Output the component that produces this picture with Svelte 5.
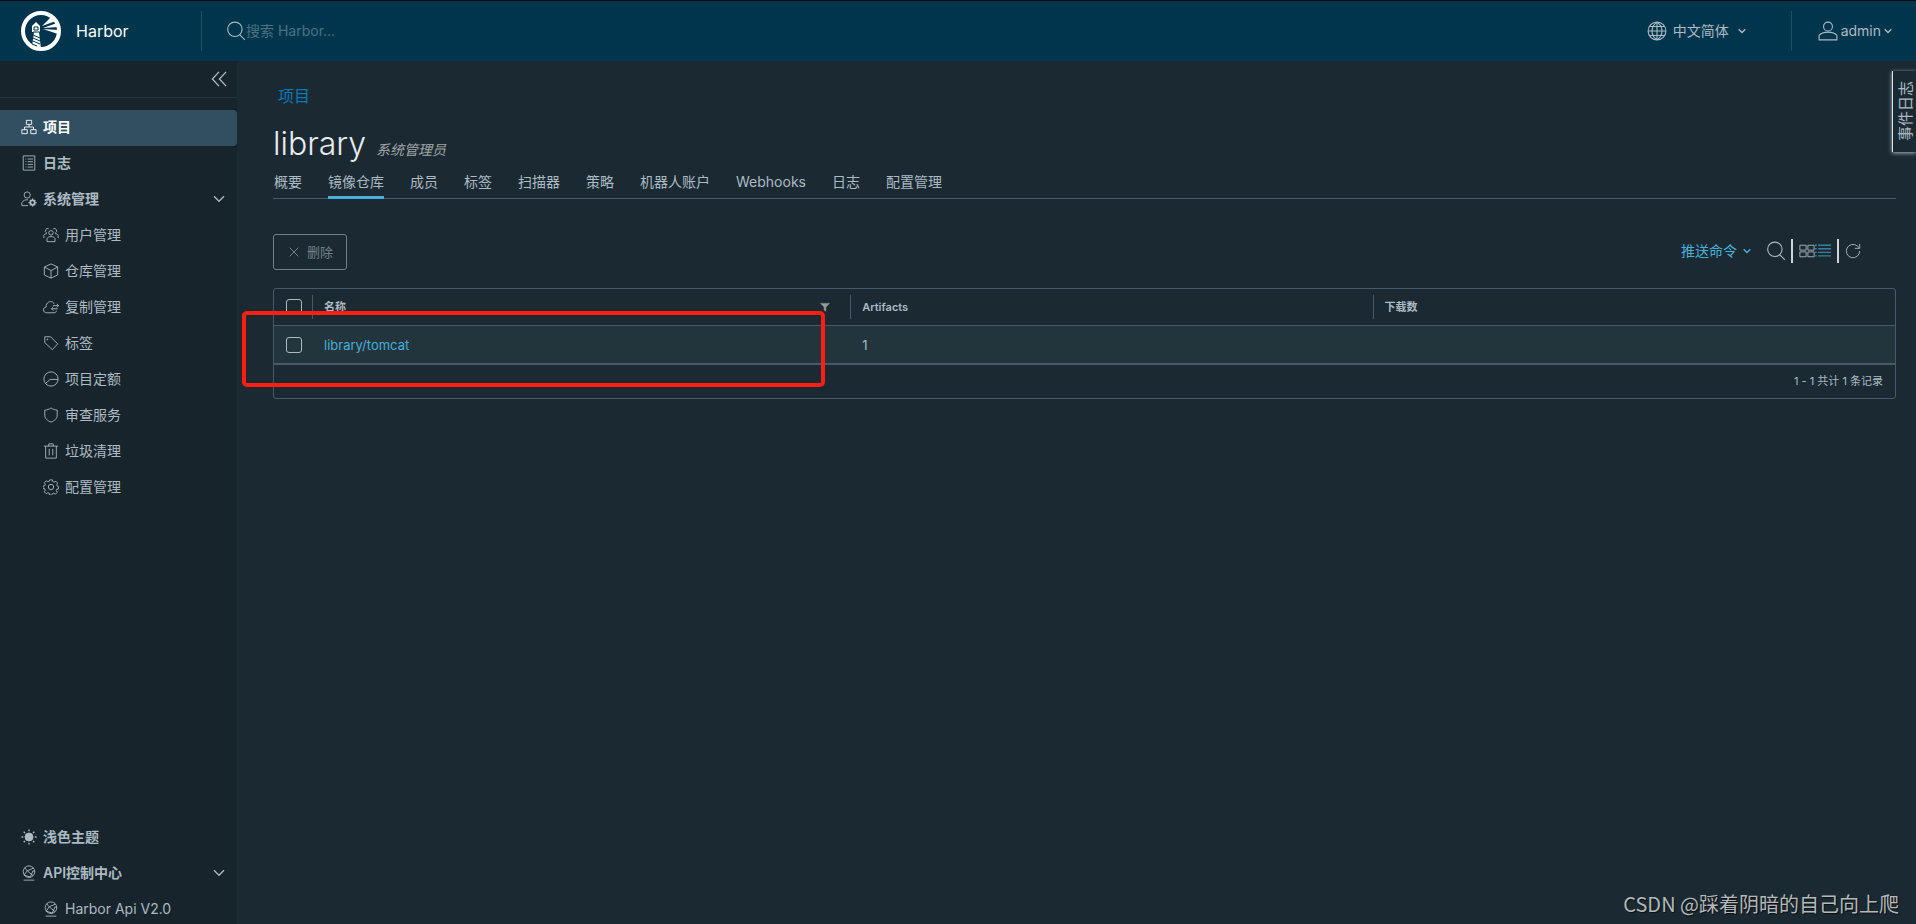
<script lang="ts">
    type NavItem = { icon: string; label: string; active?: boolean; expandable?: boolean; child?: boolean };

    const mainNav: NavItem[] = [
        { icon: 'tree', label: '项目', active: true },
        { icon: 'log', label: '日志' },
        { icon: 'admin', label: '系统管理', expandable: true },
        { icon: 'users', label: '用户管理', child: true },
        { icon: 'cube', label: '仓库管理', child: true },
        { icon: 'cloud', label: '复制管理', child: true },
        { icon: 'tag', label: '标签', child: true },
        { icon: 'quota', label: '项目定额', child: true },
        { icon: 'shield', label: '审查服务', child: true },
        { icon: 'trash', label: '垃圾清理', child: true },
        { icon: 'cog', label: '配置管理', child: true }
    ];

    const bottomNav: NavItem[] = [
        { icon: 'sun', label: '浅色主题' },
        { icon: 'api', label: 'API控制中心', expandable: true },
        { icon: 'api', label: 'Harbor Api V2.0', child: true }
    ];

    const tabs = ['概要', '镜像仓库', '成员', '标签', '扫描器', '策略', '机器人账户', 'Webhooks', '日志', '配置管理'];
    let activeTab = $state('镜像仓库');

    let repos = $state([{ name: 'library/tomcat', artifacts: 1, pulls: '', selected: false }]);
    let selectedCount = $derived(repos.filter((r) => r.selected).length);
    let keyword = $state('');

    function toggleAll(e: Event) {
        const checked = (e.target as HTMLInputElement).checked;
        repos.forEach((r) => (r.selected = checked));
    }
</script>

{#snippet icon(name: string)}
    <svg class="icon" viewBox="0 0 36 36" aria-hidden="true">
        {#if name === 'tree'}
            <path d="M12 3h12v9H12zM2 24h12v9H2zM22 24h12v9H22zM18 12v6M8 24v-6h20v6" />
        {:else if name === 'log'}
            <path d="M5 2h26v32H5zM10 9h2M15 9h12M10 15h2M15 15h12M10 21h2M15 21h12M10 27h2M15 27h12" />
        {:else if name === 'admin'}
            <circle cx="14" cy="9" r="7" />
            <path d="M16 33H2v-7c3-5 8-7 14-6" />
            <circle cx="26" cy="26" r="5" stroke-width="4" />
            <path d="M26 17v3M26 32v3M17 26h3M32 26h3M20 20l2 2M30 30l2 2M32 20l-2 2M22 30l-2 2" stroke-width="3" />
        {:else if name === 'users'}
            <circle cx="18" cy="13" r="5" />
            <path d="M9 33v-7c2-6 16-6 18 0v7zM13 4a5 5 0 1 0-5 9M2 25v-6c1-3 3-4 7-4M23 4a5 5 0 1 1 5 9M34 25v-6c-1-3-3-4-7-4" />
        {:else if name === 'cube'}
            <path d="M18 2l15 7v18l-15 7-15-7V9zM3 9l15 8 15-8M18 17v17" />
        {:else if name === 'cloud'}
            <path d="M30 26c0 3-2 5-5 5H8c-9 0-9-12-1-13C6 5 22 2 25 11M22 15h13M31 11l4 4-4 4M33 22H19M23 18l-4 4 4 4" />
        {:else if name === 'tag'}
            <path d="M4 4h13l16 16-12 13L4 17z" />
            <circle cx="10" cy="10" r="1" />
        {:else if name === 'quota'}
            <circle cx="18" cy="18" r="16" />
            <path d="M6 28l10-9h18" />
        {:else if name === 'shield'}
            <path d="M18 2c4 3 9 5 14 5v11c0 8-6 13-14 16C10 31 4 26 4 18V7c5 0 10-2 14-5z" />
        {:else if name === 'trash'}
            <path d="M2 7h32M6 7v27h24V7M13 7V2h10v5M14 13v15M22 13v15" />
        {:else if name === 'cog'}
            <path d="M15 2h6l1 4 3 1 4-2 4 4-2 4 1 3 3 1v5l-4 1-1 3 2 4-4 4-4-2-3 1-1 3h-5l-1-4-3-1-4 2-4-4 2-4-1-3-4-1v-5l4-1 1-3-2-4 4-4 4 2 3-1z" />
            <circle cx="18" cy="18" r="6" />
        {:else if name === 'sun'}
            <circle cx="18" cy="18" r="9" fill="currentColor" />
            <path d="M18 1v4M18 31v4M1 18h4M31 18h4M6 6l3 3M27 27l3 3M30 6l-3 3M9 27l-3 3" stroke-width="3" />
        {:else if name === 'api'}
            <circle cx="18" cy="15" r="13" />
            <path d="M8 6l6 7 14-6M14 13l13 11M14 13L7 23l14 4 6-14 4 2M6 34h24" />
        {:else if name === 'search'}
            <circle cx="16" cy="15" r="13" />
            <path d="M25 25l9 9" />
        {:else if name === 'globe'}
            <circle cx="18" cy="18" r="16" />
            <path d="M18 2v32M2 18h32M5 10h26M5 26h26M18 2C6 10 6 26 18 34M18 2c12 8 12 24 0 32" />
        {:else if name === 'user'}
            <circle cx="18" cy="10" r="8" />
            <path d="M2 34v-8c3-4 9-6 16-6s13 2 16 6v8z" />
        {:else if name === 'close'}
            <path d="M5 5l26 26M31 5L5 31" />
        {:else if name === 'collapse'}
            <path d="M18 2L3 18l15 16M34 2L19 18l15 16" />
        {:else if name === 'caret'}
            <path d="M3 10l15 15 15-15" />
        {:else if name === 'grid'}
            <path d="M2 5h14v11H2zM20 5h14v11H20zM2 20h14v11H2zM20 20h14v11H20z" />
        {:else if name === 'list'}
            <path d="M0 5h4M7 5h29M0 13h4M7 13h29M0 21h4M7 21h29M0 29h4M7 29h29" />
        {:else if name === 'refresh'}
            <path d="M33 18a15 15 0 1 1-5-11l4 4M33 2v10H22" />
        {:else if name === 'filter'}
            <path d="M2 5h32L21 18v15l-6-4V18z" fill="currentColor" />
        {/if}
    </svg>
{/snippet}

{#snippet navLink(item: NavItem)}
    <a href="#{item.icon}" class="nav-link" class:active={item.active} class:child={item.child}>
        {@render icon(item.icon)}
        <span>{item.label}</span>
        {#if item.expandable}
            <i class="expand">{@render icon('caret')}</i>
        {/if}
    </a>
{/snippet}

<div class="main-container">
    <header>
        <a href="#home" class="brand">
            <svg class="logo" viewBox="0 0 40 40" aria-hidden="true">
                <circle cx="20" cy="20" r="18" fill="none" stroke="#fff" stroke-width="4" />
                <path fill="#fff" d="M11 15l4-4 4 4v6h-1l2 17-9-2 2-15h-2zM21 15l10-10 4 5zM22 17l14-5 1 4zM22 18l15 1v4z" />
                <path fill="none" stroke="#00364d" d="M13 19v-3h4v3zM12 21h7M12 24l7 3M12 27l7 3M12 30l7 3M11 33l5 2" />
            </svg>
            <span>Harbor</span>
        </a>
        <label class="search">
            {@render icon('search')}
            <input type="text" aria-label="搜索" placeholder="搜索 Harbor..." bind:value={keyword} />
        </label>
        <button class="header-btn language">
            {@render icon('globe')}
            <span>中文简体</span>
            <i class="caret">{@render icon('caret')}</i>
        </button>
        <button class="header-btn account">
            {@render icon('user')}
            <span>admin</span>
            <i class="caret">{@render icon('caret')}</i>
        </button>
    </header>

    <div class="content-container">
        <nav class="sidenav">
            <div class="collapse-row">
                <button aria-label="collapse">{@render icon('collapse')}</button>
            </div>
            <div class="nav-group">
                {#each mainNav as item}
                    {@render navLink(item)}
                {/each}
            </div>
            <div class="nav-group bottom">
                {#each bottomNav as item}
                    {@render navLink(item)}
                {/each}
            </div>
        </nav>

        <main>
            <a href="#projects" class="breadcrumb">项目</a>
            <div class="title">
                <h1>library</h1>
                <em>系统管理员</em>
            </div>

            <div class="tabs" role="tablist">
                {#each tabs as tab}
                    <button role="tab" aria-selected={tab === activeTab} class:active={tab === activeTab} onclick={() => (activeTab = tab)}>{tab}</button>
                {/each}
            </div>

            <div class="toolbar">
                <button class="delete" disabled={selectedCount === 0}>
                    {@render icon('close')}
                    <span>删除</span>
                </button>
                <div class="tools">
                    <button class="push">
                        <span>推送命令</span>
                        <i class="caret">{@render icon('caret')}</i>
                    </button>
                    <button class="tool big" aria-label="search">{@render icon('search')}</button>
                    <div class="view-switch">
                        <button class="tool" aria-label="card view">{@render icon('grid')}</button>
                        <button class="tool current" aria-label="list view">{@render icon('list')}</button>
                    </div>
                    <button class="tool" aria-label="refresh">{@render icon('refresh')}</button>
                </div>
            </div>

            <div class="datagrid">
                <table>
                    <thead>
                        <tr>
                            <th class="select"><input type="checkbox" aria-label="select all" onchange={toggleAll} /></th>
                            <th class="name">
                                <div class="cell">
                                    <span>名称</span>
                                    <button aria-label="filter">{@render icon('filter')}</button>
                                </div>
                            </th>
                            <th><div class="cell">Artifacts</div></th>
                            <th><div class="cell">下载数</div></th>
                        </tr>
                    </thead>
                    <tbody>
                        {#each repos as repo}
                            <tr>
                                <td class="select"><input type="checkbox" aria-label={repo.name} bind:checked={repo.selected} /></td>
                                <td><a href="#repo">{repo.name}</a></td>
                                <td>{repo.artifacts}</td>
                                <td>{repo.pulls}</td>
                            </tr>
                        {/each}
                    </tbody>
                </table>
                <div class="grid-footer">1 - 1 共计 1 条记录</div>
                <div class="highlight"></div>
            </div>
        </main>
    </div>

    <button class="event-log"><span>事件日志</span></button>
    <div class="watermark">CSDN @踩着阴暗的自己向上爬</div>
</div>

<style>
    :global(body) {
        background: #1b2a32;
    }

    .main-container {
        display: flex;
        flex-direction: column;
        height: 100vh;
        box-sizing: border-box;
        overflow: hidden;
        border-top: 1px solid #0a0d0f;
        color: #acbac3;
        font-family: Inter, "Noto Sans CJK SC", sans-serif;
        font-size: 14px;
        line-height: 24px;
    }

    a {
        color: inherit;
        text-decoration: none;
    }

    button {
        display: flex;
        align-items: center;
        padding: 0;
        border: none;
        background: none;
        color: inherit;
        font: inherit;
        cursor: pointer;
    }

    .icon {
        display: block;
        flex: none;
        width: 16px;
        height: 16px;
        fill: none;
        stroke: currentColor;
        stroke-width: 2;
    }

    .caret .icon {
        width: 8px;
        height: 8px;
        stroke-width: 6;
    }

    /* header */
    header {
        display: flex;
        align-items: center;
        flex: none;
        height: 60px;
        background: #00364d;
    }

    .brand {
        display: flex;
        align-items: center;
        gap: 15px;
        width: 180px;
        padding-left: 21px;
        color: #fff;
        font-size: 16px;
    }

    .logo {
        width: 40px;
        height: 40px;
    }

    .search {
        display: flex;
        align-items: center;
        flex: 1;
        height: 40px;
        padding-left: 24px;
        border-left: 1px solid #1f4f63;
    }

    .search .icon {
        width: 20px;
        height: 20px;
    }

    .search input {
        width: 240px;
        padding: 0;
        border: none;
        outline: none;
        background: none;
        color: inherit;
        font: inherit;
    }

    .search input::placeholder {
        color: #4c7282;
    }

    .header-btn {
        height: 40px;
    }

    .header-btn > .icon {
        width: 20px;
        height: 20px;
    }

    .language {
        gap: 6px;
        padding-right: 45px;
        border-right: 1px solid #1f4f63;
    }

    .language .caret {
        padding-left: 3px;
    }

    .account {
        gap: 3px;
        padding: 0 24px 0 26px;
    }

    /* side navigation */
    .content-container {
        display: flex;
        flex: 1;
        min-height: 0;
    }

    .sidenav {
        display: flex;
        flex-direction: column;
        flex: none;
        width: 237px;
        background: #17242b;
    }

    .collapse-row {
        display: flex;
        justify-content: flex-end;
        height: 36px;
        padding-right: 10px;
        border-bottom: 1px solid #25343c;
    }

    .collapse-row .icon {
        stroke-width: 3;
    }

    .nav-group {
        padding-top: 12px;
    }

    /* the list is a little taller than the space left, its end is cut off */
    .nav-group.bottom {
        margin-top: auto;
        margin-bottom: -4px;
    }

    .nav-link {
        display: flex;
        align-items: center;
        gap: 6px;
        height: 36px;
        padding: 0 12px 2px 21px;
        box-sizing: border-box;
        font-weight: 600;
    }

    .nav-link.child {
        padding-left: 43px;
        font-weight: 400;
    }

    .nav-link.active {
        border-radius: 0 4px 4px 0;
        background: #324f62;
        color: #fff;
    }

    .expand {
        margin-left: auto;
    }

    .expand .icon {
        width: 12px;
        height: 12px;
        stroke-width: 4;
    }

    /* page */
    main {
        flex: 1;
        min-width: 0;
        padding: 23px 20px 0 36px;
    }

    .breadcrumb {
        display: block;
        width: max-content;
        margin-left: 5px;
        color: #0079b8;
        font-size: 16px;
    }

    .title {
        display: flex;
        align-items: baseline;
        gap: 10px;
        margin-top: 16px;
    }

    h1 {
        margin: 0;
        color: #e9ecef;
        font-size: 32px;
        font-weight: 300;
        line-height: 40px;
    }

    .title em {
        color: #a0a4a7;
    }

    .tabs {
        display: flex;
        gap: 26px;
        height: 34px;
        padding-left: 1px;
        border-bottom: 1px solid #485969;
    }

    .tabs button {
        height: 35px;
    }

    .tabs button.active {
        box-shadow: inset 0 -3px #49afd9;
    }

    .toolbar {
        display: flex;
        align-items: center;
        justify-content: space-between;
        margin: 35px 0 18px;
    }

    .delete {
        gap: 7px;
        height: 36px;
        padding: 0 13px 0 14px;
        border: 1px solid #73808a;
        border-radius: 3px;
        color: #73808a;
        font-size: 13px;
    }

    .delete .icon {
        width: 12px;
        height: 12px;
        stroke-width: 3;
    }

    .tools {
        display: flex;
        align-items: center;
        padding: 0 35px 2px 0;
    }

    .push {
        gap: 6px;
        margin-right: 15px;
        color: #49afd9;
    }

    .tool.big .icon {
        width: 20px;
        height: 20px;
    }

    .view-switch {
        display: flex;
        height: 24px;
        margin: 0 6px 0 5px;
        padding: 0 6px;
        border: solid #d0d4d6;
        border-width: 0 2px;
    }

    .tool.current {
        color: #3a7f9c;
    }

    .tool.current .icon {
        stroke-width: 3;
    }

    /* datagrid */
    .datagrid {
        position: relative;
        border: 1px solid #485969;
        border-radius: 3px;
    }

    table {
        width: 100%;
        table-layout: fixed;
        border-collapse: collapse;
        font-size: 13px;
    }

    th,
    td {
        height: 37px;
        padding: 0 0 0 12px;
        text-align: left;
    }

    th {
        height: 36px;
        padding: 0;
        font-size: 11px;
        font-weight: 600;
    }

    .select {
        width: 38px;
        padding: 0 0 0 12px;
        box-sizing: border-box;
    }

    .name {
        width: 33.2%;
    }

    .cell {
        display: flex;
        align-items: center;
        justify-content: space-between;
        padding: 0 20px 0 11px;
        border-left: 1px solid #485969;
    }

    .cell .icon {
        width: 10px;
        height: 10px;
        color: #9b9b9b;
    }

    tbody tr {
        border-top: 1px solid #485969;
        border-bottom: 2px solid #485969;
        background: #22343c;
    }

    td a {
        color: #49afd9;
    }

    input[type="checkbox"] {
        display: block;
        width: 16px;
        height: 16px;
        margin: 0;
        border: 1px solid #acbac3;
        border-radius: 3px;
        appearance: none;
    }

    input[type="checkbox"]:checked {
        background: #49afd9;
    }

    .grid-footer {
        height: 33px;
        padding-right: 12px;
        font-size: 11px;
        line-height: 33px;
        text-align: right;
    }

    .highlight {
        position: absolute;
        top: 22px;
        right: 66%;
        bottom: 11px;
        left: -32px;
        border: 4px solid #ff1e0f;
        border-radius: 5px;
        pointer-events: none;
    }

    /* things floating over the page */
    .event-log {
        position: absolute;
        top: 71px;
        right: 0;
        justify-content: center;
        width: 24px;
        height: 81px;
        padding-left: 3px;
        border-left: 1px solid #e0e4e6;
        background: #1b2a32;
        box-shadow: 0 1px 4px #acbac3;
        font-size: 15px;
    }

    .event-log span {
        writing-mode: vertical-rl;
        text-orientation: sideways;
        transform: rotate(180deg);
    }

    .watermark {
        position: absolute;
        right: 17px;
        bottom: 8px;
        color: #b3b8bb;
        font-family: "Noto Sans CJK SC", sans-serif;
        font-size: 20px;
        text-shadow: 1px 1px 1px #0a0d0f;
    }
</style>
